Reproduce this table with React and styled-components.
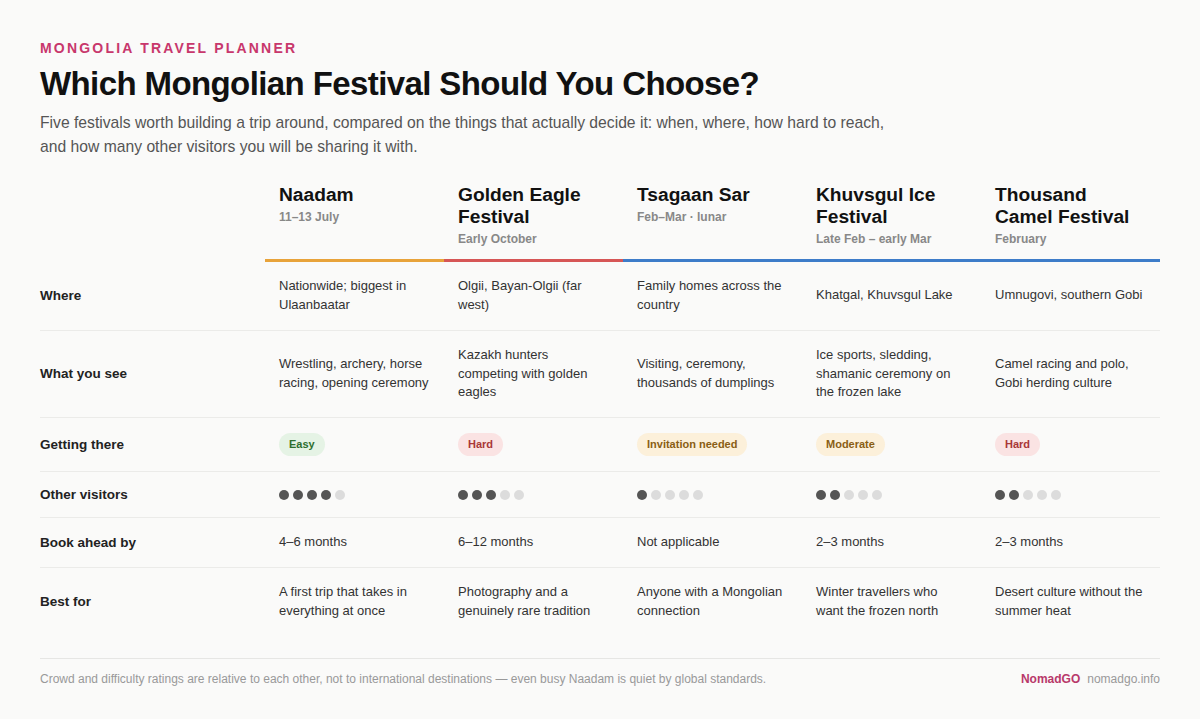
import React from "react";
import styled, { createGlobalStyle } from "styled-components";

const Global = createGlobalStyle`
  html, body { margin: 0; padding: 0; background: #fafaf9; }
  body { font-family: "Liberation Sans", Arial, sans-serif; color: #222; }
`;

const Page = styled.div`
  width: 1120px;
  padding: 40px 40px 0;
`;

const Eyebrow = styled.div`
  font-size: 14px;
  line-height: 16px;
  font-weight: 700;
  letter-spacing: 2.2px;
  text-transform: uppercase;
  color: #c8376c;
`;

const Title = styled.h1`
  margin: 8px 0 0;
  font-size: 33px;
  line-height: 40px;
  font-weight: 700;
  letter-spacing: -0.6px;
  color: #111;
`;

const Lede = styled.p`
  margin: 7px 0 0;
  max-width: 870px;
  font-size: 15.7px;
  line-height: 24px;
  color: #555;
`;

const Table = styled.div`
  margin-top: 25px;
`;

const Row = styled.div`
  display: grid;
  grid-template-columns: 225px repeat(5, 1fr);
  border-bottom: ${(p) => (p.$last ? "none" : "1px solid #ebebe9")};
`;

const HeadRow = styled.div`
  display: grid;
  grid-template-columns: 225px repeat(5, 1fr);
`;

const HeadCell = styled.div`
  padding: 0 14px 12px;
  border-bottom: 3px solid ${(p) => p.$accent};
`;

const HeadBlank = styled.div``;

const Name = styled.div`
  font-size: 19.2px;
  line-height: 22px;
  font-weight: 700;
  color: #111;
`;

const When = styled.div`
  margin-top: 3px;
  font-size: 12px;
  line-height: 16px;
  font-weight: 700;
  color: #888;
`;

const Label = styled.div`
  display: flex;
  align-items: center;
  font-size: 13.5px;
  font-weight: 700;
  color: #222;
  padding: 15px 0;
`;

const Cell = styled.div`
  display: flex;
  align-items: center;
  padding: 15px 14px;
  font-size: 13px;
  line-height: 1.45;
  color: #333;
`;

const tones = {
  easy: { bg: "#e5f3e5", fg: "#2e6f2e" },
  hard: { bg: "#fae3e3", fg: "#a93838" },
  warm: { bg: "#fcf0da", fg: "#8a5e14" },
};

const Badge = styled.span`
  display: inline-flex;
  align-items: center;
  height: 23px;
  padding: 0 10px;
  border-radius: 12px;
  font-size: 11px;
  font-weight: 700;
  background: ${(p) => tones[p.$tone].bg};
  color: ${(p) => tones[p.$tone].fg};
`;

const Dots = styled.div`
  display: flex;
  gap: 4px;
  height: 15px;
  align-items: center;
`;

const Dot = styled.span`
  width: 10px;
  height: 10px;
  border-radius: 50%;
  background: ${(p) => (p.$on ? "#555" : "#dcdcdc")};
`;

const Footer = styled.div`
  margin-top: 22px;
  border-top: 1px solid #e6e6e4;
  padding-top: 12px;
  display: flex;
  justify-content: space-between;
  align-items: center;
  font-size: 12px;
  line-height: 16px;
  color: #999;
`;

const Brand = styled.div`
  display: flex;
  gap: 7px;
  font-size: 12px;
  color: #999;
`;

const BrandName = styled.span`
  font-weight: 700;
  color: #b8386a;
`;

const festivals = [
  {
    name: "Naadam",
    when: "11–13 July",
    accent: "#e8a33a",
    where: "Nationwide; biggest in Ulaanbaatar",
    see: "Wrestling, archery, horse racing, opening ceremony",
    access: ["Easy", "easy"],
    crowd: 4,
    book: "4–6 months",
    best: "A first trip that takes in everything at once",
  },
  {
    name: "Golden Eagle Festival",
    when: "Early October",
    accent: "#d65656",
    where: "Olgii, Bayan-Olgii (far west)",
    see: "Kazakh hunters competing with golden eagles",
    access: ["Hard", "hard"],
    crowd: 3,
    book: "6–12 months",
    best: "Photography and a genuinely rare tradition",
  },
  {
    name: "Tsagaan Sar",
    when: "Feb–Mar · lunar",
    accent: "#3d7cc9",
    where: "Family homes across the country",
    see: "Visiting, ceremony, thousands of dumplings",
    access: ["Invitation needed", "warm"],
    crowd: 1,
    book: "Not applicable",
    best: "Anyone with a Mongolian connection",
  },
  {
    name: "Khuvsgul Ice Festival",
    when: "Late Feb – early Mar",
    accent: "#3d7cc9",
    where: "Khatgal, Khuvsgul Lake",
    see: "Ice sports, sledding, shamanic ceremony on the frozen lake",
    access: ["Moderate", "warm"],
    crowd: 2,
    book: "2–3 months",
    best: "Winter travellers who want the frozen north",
  },
  {
    name: "Thousand Camel Festival",
    when: "February",
    accent: "#3d7cc9",
    where: "Umnugovi, southern Gobi",
    see: "Camel racing and polo, Gobi herding culture",
    access: ["Hard", "hard"],
    crowd: 2,
    book: "2–3 months",
    best: "Desert culture without the summer heat",
  },
];

const rows = [
  { label: "Where", render: (f) => f.where },
  { label: "What you see", render: (f) => f.see },
  {
    label: "Getting there",
    render: (f) => <Badge $tone={f.access[1]}>{f.access[0]}</Badge>,
  },
  {
    label: "Other visitors",
    render: (f) => (
      <Dots>
        {[0, 1, 2, 3, 4].map((i) => (
          <Dot key={i} $on={i < f.crowd} />
        ))}
      </Dots>
    ),
  },
  { label: "Book ahead by", render: (f) => f.book },
  { label: "Best for", render: (f) => f.best },
];

export default function App() {
  return (
    <>
      <Global />
      <Page>
        <Eyebrow>Mongolia Travel Planner</Eyebrow>
        <Title>Which Mongolian Festival Should You Choose?</Title>
        <Lede>
          Five festivals worth building a trip around, compared on the things
          that actually decide it: when, where, how hard to reach, and how many
          other visitors you will be sharing it with.
        </Lede>
        <Table>
          <HeadRow>
            <HeadBlank />
            {festivals.map((f) => (
              <HeadCell key={f.name} $accent={f.accent}>
                <Name>{f.name}</Name>
                <When>{f.when}</When>
              </HeadCell>
            ))}
          </HeadRow>
          {rows.map((r, i) => (
            <Row key={r.label} $last={i === rows.length - 1}>
              <Label>{r.label}</Label>
              {festivals.map((f) => (
                <Cell key={f.name}>{r.render(f)}</Cell>
              ))}
            </Row>
          ))}
        </Table>
        <Footer>
          <span>
            Crowd and difficulty ratings are relative to each other, not to
            international destinations — even busy Naadam is quiet by global
            standards.
          </span>
          <Brand>
            <BrandName>NomadGO</BrandName>
            <span>nomadgo.info</span>
          </Brand>
        </Footer>
      </Page>
    </>
  );
}
